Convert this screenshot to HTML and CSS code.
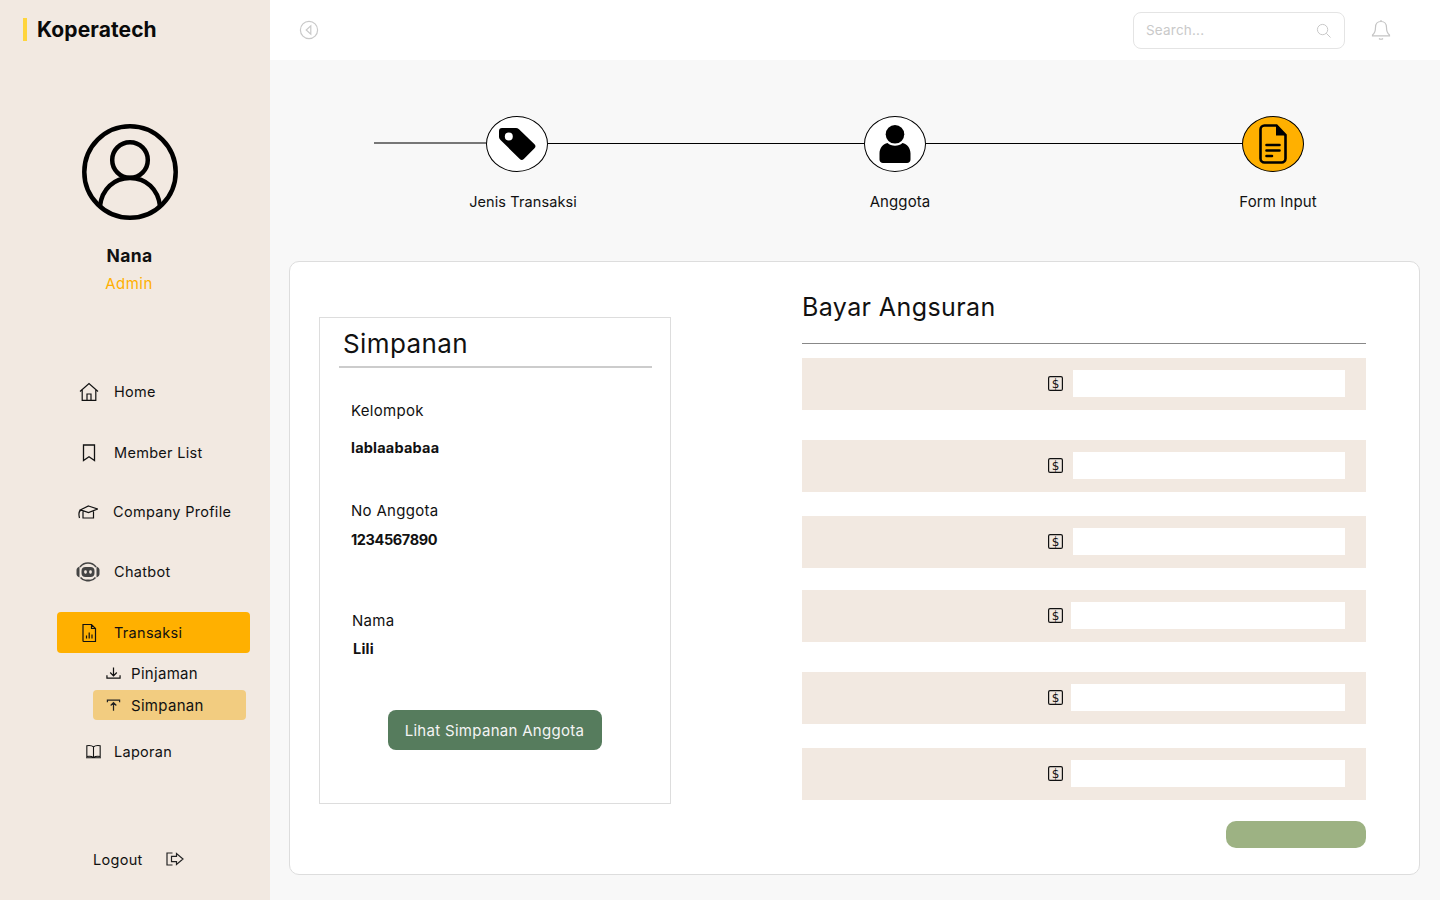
FILE: index.html
```html
<!DOCTYPE html>
<html lang="id">
<head>
  <meta charset="UTF-8" />
  <meta name="viewport" content="width=device-width, initial-scale=1.0" />
  <title>Koperatech</title>
  <link rel="stylesheet" href="styles.css">
</head>
<body>
  <aside class="sidebar">
    <div class="brand">Koperatech</div>

    <div class="profile">
      <svg class="avatar" viewBox="0 0 96 96" fill="none" stroke="#000" stroke-width="4.5">
        <circle cx="48" cy="48" r="45.7" />
        <circle cx="48" cy="36" r="17.8" />
        <path d="M18 82c2-17 14-28 30-28s28 11 30 28" />
      </svg>
      <div class="profile-name">Nana</div>
      <div class="profile-role">Admin</div>
    </div>

    <nav class="menu">
      <a class="menu-item">
        <svg class="icon" viewBox="0 0 20 20" fill="none" stroke="#111" stroke-width="1.2"><path d="M1 9.5 10 1.5l9 8M3.2 8v10.3h13.6V8M8 18.3V12h4v6.3" /></svg>
        <span>Home</span>
      </a>
      <a class="menu-item item-member">
        <svg class="icon" viewBox="0 0 20 20" fill="none" stroke="#111" stroke-width="1.3"><path d="M4.5 2h11v15.5L10 13.8l-5.500 3.700z" /></svg>
        <span>Member List</span>
      </a>
      <a class="menu-item item-company">
        <svg class="icon icon-cap" viewBox="0 0 20 14" fill="none" stroke="#111" stroke-width="1.2"><path d="M10.500 1 19.500 4 10.500 7.500 2.500 4.800zM5 6.500V13h10.500V5.800M3.500 4.800C1 5.500.5 9 1.500 13" /></svg>
        <span>Company Profile</span>
      </a>
      <a class="menu-item item-chat">
        <svg class="icon-chat" viewBox="0 0 24 20" fill="#444">
          <rect x="5.500" y="5" width="13" height="10" rx="4" />
          <rect x="8.200" y="8.300" width="2.600" height="3.400" rx="1.100" fill="#f2e9e1" />
          <rect x="13.200" y="8.300" width="2.600" height="3.400" rx="1.100" fill="#f2e9e1" />
          <path d="M.5 8c0-1.500 1-2.800 3-3.500v11c-2-.7-3-2-3-3.500zM23.500 8c0-1.500-1-2.800-3-3.500v11c2-.7 3-2 3-3.500z" />
          <path d="M4 5C6 2.300 8.800 1 12 1s6 1.300 8 4M4.500 15.500C6 17.300 8 18.300 10 18.600M19.500 15.500C18 17.300 16 18.300 14 18.600" fill="none" stroke="#444" stroke-width="1.500" />
          <rect x="9.800" y="17.600" width="4.400" height="1.900" rx=".9" />
        </svg>
        <span>Chatbot</span>
      </a>
      <a class="menu-item menu-active">
        <svg class="icon" viewBox="0 0 20 20" fill="none" stroke="#111" stroke-width="1.2"><path d="M4 1.500h8.500l4 4v13H4.700A.7.7 0 0 1 4 17.800zM12.500 1.500v4h4M7.500 15.500v-3M10.200 15.500v-6M13 15.500v-4" /></svg>
        <span>Transaksi</span>
      </a>
      <div class="submenu">
        <a class="submenu-item">
          <svg class="icon-small" viewBox="0 0 16 14" fill="none" stroke="#111" stroke-width="1.3"><path d="M8 1v8.500M4.500 6.500 8 10l3.500-3.500M1 9.500v3h14v-3" /></svg>
          <span>Pinjaman</span>
        </a>
        <a class="submenu-item submenu-active">
          <svg class="icon-small" viewBox="0 0 16 14" fill="none" stroke="#222" stroke-width="1.3"><path d="M1.500 4V1.800h13V4M8 13V5M5 7.500 8 4.500l3 3" /></svg>
          <span>Simpanan</span>
        </a>
      </div>
      <a class="menu-item item-laporan">
        <svg class="icon-book" viewBox="0 0 20 18" fill="none" stroke="#111" stroke-width="1.3"><path d="M10 3.500C8.500 2 5 1.600 2 2v13c3-.4 6.500 0 8 1.300 1.500-1.300 5-1.700 8-1.300V2c-3-.4-6.500 0-8 1.500zM10 3.500v12.800M1 16.500h18" /></svg>
        <span>Laporan</span>
      </a>
    </nav>

    <a class="logout">
      <span>Logout</span>
      <svg class="logout-icon" viewBox="0 0 18 14" fill="none" stroke="#222" stroke-width="1.2"><path d="M6.500 1H1v12h5.500M5.500 4.300h5V1.500L17 7l-6.500 5.500V9.700h-5z" /></svg>
    </a>
  </aside>

  <div class="main">
    <header class="topbar">
      <svg class="back-icon" viewBox="0 0 20 20" fill="none" stroke="#c9c9c9" stroke-width="1.2"><circle cx="10" cy="10" r="8.600" /><path d="M11.800 5.800v8.400L7.200 10z" /></svg>
      <div class="top-right">
        <div class="search">
          <span>Search...</span>
          <svg class="search-icon" viewBox="0 0 16 16" fill="none" stroke="#c4c4c4" stroke-width="1"><circle cx="7" cy="7" r="5.500" /><path d="m11 11 4.500 4.500" /></svg>
        </div>
        <svg class="bell-icon" viewBox="0 0 20 22" fill="none" stroke="#c4c4c4" stroke-width="1.2"><path d="M10 2.500c-3.500 0-5.500 2.500-5.500 6 0 4-1 6-3 7.500v.8h17V16c-2-1.500-3-3.500-3-7.500 0-3.500-2-6-5.500-6zM10 1v1.500M8 19.500c1 1 3 1 4 0" /></svg>
      </div>
    </header>

    <section class="stepper">
      <div class="step-line">
        <div class="line line-first"></div>
        <div class="step-circle">
          <svg class="tag-icon" viewBox="0 0 38 34" fill="#000"><path fill-rule="evenodd" d="M1 4c0-2 1-3 3-3h14c1 0 2 .4 3 1.200l15.500 15c1.300 1.300 1.300 2.800 0 4L25.800 32c-1.300 1.300-2.800 1.300-4 0L2.500 13C1.500 12 1 11 1 10zm9.800 1.500a4 4 0 1 0 0 8 4 4 0 0 0 0-8z" /></svg>
        </div>
        <div class="line"></div>
        <div class="step-circle">
          <svg class="person-icon" viewBox="0 0 32 38" fill="#000"><circle cx="16" cy="9.300" r="9.300" /><path d="M8.500 18c2 1.800 4.500 2.800 7.500 2.800s5.500-1 7.500-2.800c4.500.8 8 5 8 10.500v6c0 2-1.500 3.500-3.500 3.500H4c-2 0-3.500-1.500-3.500-3.500v-6C.5 23 4 18.800 8.500 18z" /></svg>
        </div>
        <div class="line"></div>
        <div class="step-circle step-current">
          <svg class="doc-icon" viewBox="0 0 28 40" fill="none" stroke="#000" stroke-width="2.600"><path d="M5.500 1.500h12L26.500 11v23.500c0 2.200-1.800 4-4 4h-17c-2.200 0-4-1.800-4-4v-29c0-2.200 1.800-4 4-4z" /><path d="M17 2v9.500h9.500z" fill="#000" stroke="none" /><path d="M7.500 21h13M7.500 26.500h13M7.500 32h5.500" stroke-linecap="round" /></svg>
        </div>
      </div>
      <div class="step-labels">
        <span class="label-one">Jenis Transaksi</span>
        <span class="label-two">Anggota</span>
        <span class="label-three">Form Input</span>
      </div>
    </section>

    <section class="panel">
      <div class="saving-card">
        <h2 class="saving-title">Simpanan</h2>
        <div class="saving-field field-group">
          <div>Kelompok</div>
          <strong>lablaababaa</strong>
        </div>
        <div class="saving-field field-number">
          <div>No Anggota</div>
          <strong class="number-value">1234567890</strong>
        </div>
        <div class="saving-field field-name">
          <div>Nama</div>
          <strong class="name-value">Lili</strong>
        </div>
        <button class="saving-button">Lihat Simpanan Anggota</button>
      </div>

      <div class="pay-form">
        <h2 class="pay-title">Bayar Angsuran</h2>
        <div class="pay-row row-one"><svg class="dollar" viewBox="0 0 15 15"><rect x=".6" y=".6" width="13.8" height="13.8" rx="1.5" /><text x="7.5" y="11.800" text-anchor="middle">$</text></svg><div class="pay-input"></div></div>
        <div class="pay-row row-two"><svg class="dollar" viewBox="0 0 15 15"><rect x=".6" y=".6" width="13.8" height="13.8" rx="1.5" /><text x="7.5" y="11.800" text-anchor="middle">$</text></svg><div class="pay-input"></div></div>
        <div class="pay-row row-three"><svg class="dollar" viewBox="0 0 15 15"><rect x=".6" y=".6" width="13.8" height="13.8" rx="1.5" /><text x="7.5" y="11.800" text-anchor="middle">$</text></svg><div class="pay-input"></div></div>
        <div class="pay-row row-four"><svg class="dollar" viewBox="0 0 15 15"><rect x=".6" y=".6" width="13.8" height="13.8" rx="1.5" /><text x="7.5" y="11.800" text-anchor="middle">$</text></svg><div class="pay-input input-long"></div></div>
        <div class="pay-row row-five"><svg class="dollar" viewBox="0 0 15 15"><rect x=".6" y=".6" width="13.8" height="13.8" rx="1.5" /><text x="7.5" y="11.800" text-anchor="middle">$</text></svg><div class="pay-input input-long"></div></div>
        <div class="pay-row row-six"><svg class="dollar" viewBox="0 0 15 15"><rect x=".6" y=".6" width="13.8" height="13.8" rx="1.5" /><text x="7.5" y="11.800" text-anchor="middle">$</text></svg><div class="pay-input input-long"></div></div>
        <div class="pay-submit"></div>
      </div>
    </section>
  </div>
</body>
</html>
```

FILE: styles.css
```css
* {
  box-sizing: border-box;
}

html, body {
  height: 100%;
  margin: 0;
  padding: 0;
}

body {
  display: flex;
  height: 900px;
  overflow: hidden;
  background-color: #f8f8f8;
  color: #111;
  font-family: Inter, "Liberation Sans", sans-serif;
  font-size: 14.5px;
  letter-spacing: 0.3px;
}

svg {
  display: block;
  flex-shrink: 0;
}

/* sidebar */
.sidebar {
  width: 270px;
  flex-shrink: 0;
  display: flex;
  flex-direction: column;
  background-color: #f2e9e1;
}

.brand {
  margin: 18px 0 0 23px;
  height: 23px;
  padding-left: 10px;
  border-left: 4px solid #ffd53d;
  color: #0a0a0a;
  font-size: 21px;
  font-weight: 700;
  line-height: 24px;
  letter-spacing: 0.1px;
}

.profile {
  display: flex;
  flex-direction: column;
  align-items: center;
  width: 260px;
  margin-top: 83px;
}

.avatar {
  width: 96px;
  height: 96px;
}

.profile-name {
  margin: 26px 1px 0 0;
  font-size: 17.5px;
  font-weight: 700;
  line-height: 20px;
}

.profile-role {
  margin: 9px 2px 0 0;
  color: #ffb000;
  font-size: 15px;
  line-height: 18px;
  letter-spacing: 0.5px;
}

.menu {
  display: flex;
  flex-direction: column;
  margin-top: 78px;
}

.menu-item {
  display: flex;
  align-items: center;
  gap: 15px;
  height: 41px;
  margin: 0 20px 0 57px;
  padding-left: 22px;
  border-radius: 4px;
}

.item-member {
  margin-top: 20px;
}

.item-company {
  margin-top: 18px;
  padding-left: 21px;
}

.item-chat {
  margin-top: 19px;
  gap: 14px;
  padding-left: 19px;
}

.menu-active {
  margin-top: 20px;
  background-color: #ffb000;
}

.item-laporan {
  margin-top: 11px;
  gap: 12px;
  padding-left: 28px;
}

.icon {
  width: 20px;
  height: 20px;
}

.icon-cap {
  height: 14px;
}

.icon-chat {
  width: 24px;
  height: 20px;
}

.icon-book {
  width: 17px;
  height: 15px;
}

.submenu {
  display: flex;
  flex-direction: column;
  gap: 2px;
  margin: 5px 0 0 93px;
  width: 153px;
}

.submenu-item {
  display: flex;
  align-items: center;
  gap: 10px;
  height: 30px;
  padding-left: 13px;
  border-radius: 4px;
  font-size: 15px;
}

.submenu-active {
  background-color: #f2cc80;
}

.icon-small {
  width: 15px;
  height: 14px;
}

.logout {
  display: flex;
  align-items: center;
  gap: 23px;
  margin: 77px 0 0 93px;
  height: 20px;
}

.logout-icon {
  width: 18px;
  height: 14px;
}

/* main area */
.main {
  flex: 1;
  display: flex;
  flex-direction: column;
  min-width: 0;
}

.topbar {
  display: flex;
  align-items: center;
  justify-content: space-between;
  height: 60px;
  padding: 0 49px 0 29px;
  background-color: #fff;
}

.back-icon {
  width: 20px;
  height: 20px;
}

.top-right {
  display: flex;
  align-items: center;
  gap: 26px;
}

.search {
  display: flex;
  align-items: center;
  justify-content: space-between;
  width: 212px;
  height: 37px;
  padding: 0 13px 0 12px;
  border: 1px solid #e4e4e4;
  border-radius: 8px;
  color: #c9c9c9;
  font-size: 13.5px;
  letter-spacing: 0.2px;
}

.search-icon {
  width: 15px;
  height: 15px;
}

.bell-icon {
  width: 20px;
  height: 22px;
}

.stepper {
  height: 201px;
  padding-top: 56px;
}

.step-line {
  display: flex;
  align-items: center;
  margin-left: 104px;
  width: 930px;
}

.line {
  flex: 1;
  height: 1px;
  margin-bottom: 2px;
  background-color: #000;
}

.line-first {
  flex: none;
  width: 112px;
  background-color: #777;
  height: 2px;
}

.step-circle {
  display: flex;
  align-items: center;
  justify-content: center;
  width: 62px;
  height: 56px;
  border: 1px solid #000;
  border-radius: 50%;
  background-color: #fff;
}

.step-current {
  background-color: #ffb000;
}

.tag-icon {
  width: 38px;
  height: 34px;
}

.person-icon {
  width: 32px;
  height: 38px;
}

.doc-icon {
  width: 28px;
  height: 40px;
}

.step-labels {
  position: relative;
  height: 20px;
  margin-top: 21px;
  line-height: 18px;
  letter-spacing: 0.1px;
}

.step-labels span {
  position: absolute;
  top: 0;
  transform: translateX(-50%);
}

.label-one {
  left: 253px;
}

.label-two {
  left: 630px;
  font-size: 15px;
}

.label-three {
  left: 1008px;
  font-size: 15px;
}

.panel {
  display: flex;
  width: 1131px;
  height: 614px;
  margin-left: 19px;
  border: 1px solid #ddd;
  border-radius: 10px;
  background-color: #fff;
}

.saving-card {
  width: 352px;
  height: 487px;
  margin: 55px 0 0 29px;
  padding: 0 18px 0 19px;
  display: flex;
  flex-direction: column;
  border: 1px solid #ddd;
}

.saving-title {
  margin: 0;
  height: 50px;
  padding: 9px 0 0 4px;
  border-bottom: 2px solid #ccc;
  font-size: 26px;
  font-weight: 400;
  line-height: 34px;
  letter-spacing: 0.4px;
}

.saving-field {
  display: flex;
  flex-direction: column;
  padding-left: 12px;
  font-size: 15px;
}

.saving-field strong {
  font-size: 14.5px;
  font-weight: 700;
  letter-spacing: 0.2px;
}

.saving-field .number-value {
  letter-spacing: -0.4px;
}

.saving-field .name-value {
  margin-left: 1px;
}

.field-group {
  margin-top: 33px;
  gap: 19px;
}

.field-number {
  margin-top: 45px;
  gap: 11px;
}

.field-name {
  margin-top: 63px;
  gap: 10px;
  padding-left: 13px;
}

.saving-button {
  align-self: center;
  width: 214px;
  height: 40px;
  margin: 53px 2px 0 0;
  border: none;
  border-radius: 8px;
  background-color: #567c5d;
  color: #f4f4f4;
  font-family: inherit;
  font-size: 15px;
  letter-spacing: 0.3px;
}

.pay-form {
  width: 564px;
  margin-left: 131px;
  display: flex;
  flex-direction: column;
}

.pay-title {
  margin: 0;
  height: 82px;
  padding-top: 28px;
  border-bottom: 1px solid #888;
  font-size: 25px;
  font-weight: 400;
  line-height: 34px;
  letter-spacing: 0.4px;
}

.pay-row {
  display: flex;
  align-items: center;
  justify-content: flex-end;
  gap: 10px;
  height: 52px;
  padding: 0 21px 2px 0;
  background-color: #f2e9e1;
}

.row-one {
  margin-top: 14px;
}

.row-two,
.row-five {
  margin-top: 30px;
}

.row-three,
.row-six {
  margin-top: 24px;
}

.row-four {
  margin-top: 22px;
}

.pay-input {
  width: 272px;
  height: 27px;
  background-color: #fff;
}

.input-long {
  width: 274px;
  margin-left: -2px;
}

.dollar {
  width: 15px;
  height: 15px;
}

.dollar rect {
  fill: none;
  stroke: #111;
  stroke-width: 1.2;
}

.dollar text {
  fill: #111;
  font-family: "DejaVu Sans", sans-serif;
  font-size: 12px;
  letter-spacing: 0;
}

.pay-submit {
  align-self: flex-end;
  width: 140px;
  height: 27px;
  margin-top: 21px;
  border-radius: 10px;
  background-color: #9db283;
}
```
